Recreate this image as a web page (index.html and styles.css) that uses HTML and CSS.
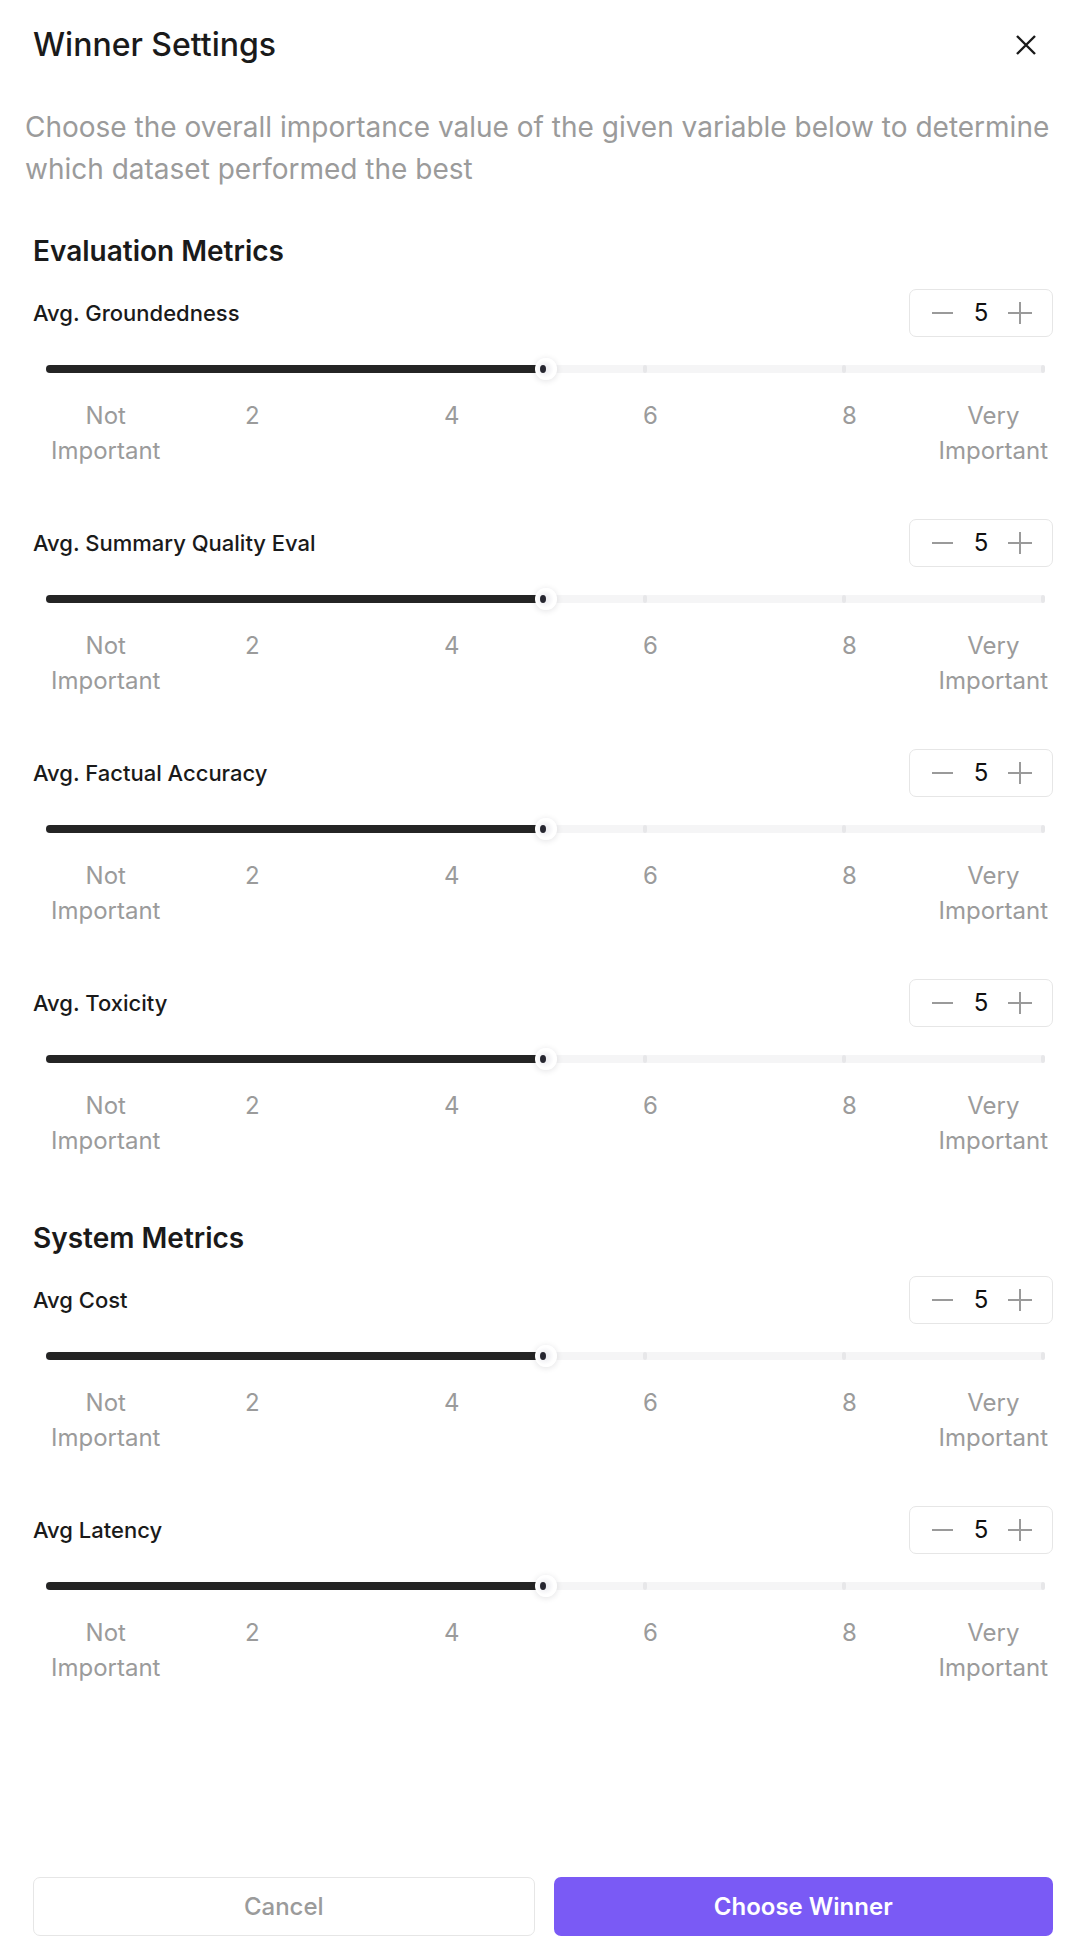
FILE: index.html
```html
<!DOCTYPE html>
<html lang="en">
<head>
<meta charset="utf-8">
<title>Winner Settings</title>
<link rel="stylesheet" href="styles.css">
</head>
<body>
<div class="modal">
  <header class="modal-header">
    <h1 class="modal-title">Winner Settings</h1>
    <button class="close-btn" aria-label="Close">
      <svg width="20" height="20" viewBox="0 0 20 20"><path d="M1 1L19 19M19 1L1 19" stroke="#1a1a1a" stroke-width="2.4" fill="none"/></svg>
    </button>
  </header>
  <p class="modal-desc">Choose the overall importance value of the given variable below to determine which dataset performed the best</p>

  <section class="metric-section">
    <h2 class="section-title">Evaluation Metrics</h2>
    <div class="metric-list">
      <div class="metric">
        <div class="metric-head">
          <span class="metric-name">Avg. Groundedness</span>
          <div class="stepper">
            <svg class="step-icon" width="22" height="22" viewBox="0 0 22 22"><path d="M0 11H21" stroke="#9a9a9a" stroke-width="2"/></svg>
            <span class="stepper-value">5</span>
            <svg class="step-icon" width="24" height="24" viewBox="0 0 24 24"><path d="M0 12H24M12 1V23" stroke="#9a9a9a" stroke-width="2"/></svg>
          </div>
        </div>
        <div class="slider">
          <div class="slider-track">
            <div class="slider-fill" style="width:50%"></div>
            <span class="tick" style="left:0%"></span>
            <span class="tick" style="left:19.92%"></span>
            <span class="tick" style="left:39.84%"></span>
            <span class="tick" style="left:59.76%"></span>
            <span class="tick" style="left:79.68%"></span>
            <span class="tick" style="left:99.6%"></span>
            <span class="thumb" style="left:50%"><span class="thumb-dot"></span></span>
          </div>
        </div>
        <div class="marks">
          <span class="mark mark-start">Not<br>Important</span>
          <span class="mark" style="left:19.92%">2</span>
          <span class="mark" style="left:39.84%">4</span>
          <span class="mark" style="left:59.76%">6</span>
          <span class="mark" style="left:79.68%">8</span>
          <span class="mark mark-end">Very<br>Important</span>
        </div>
      </div>

      <div class="metric">
        <div class="metric-head">
          <span class="metric-name">Avg. Summary Quality Eval</span>
          <div class="stepper">
            <svg class="step-icon" width="22" height="22" viewBox="0 0 22 22"><path d="M0 11H21" stroke="#9a9a9a" stroke-width="2"/></svg>
            <span class="stepper-value">5</span>
            <svg class="step-icon" width="24" height="24" viewBox="0 0 24 24"><path d="M0 12H24M12 1V23" stroke="#9a9a9a" stroke-width="2"/></svg>
          </div>
        </div>
        <div class="slider">
          <div class="slider-track">
            <div class="slider-fill" style="width:50%"></div>
            <span class="tick" style="left:0%"></span>
            <span class="tick" style="left:19.92%"></span>
            <span class="tick" style="left:39.84%"></span>
            <span class="tick" style="left:59.76%"></span>
            <span class="tick" style="left:79.68%"></span>
            <span class="tick" style="left:99.6%"></span>
            <span class="thumb" style="left:50%"><span class="thumb-dot"></span></span>
          </div>
        </div>
        <div class="marks">
          <span class="mark mark-start">Not<br>Important</span>
          <span class="mark" style="left:19.92%">2</span>
          <span class="mark" style="left:39.84%">4</span>
          <span class="mark" style="left:59.76%">6</span>
          <span class="mark" style="left:79.68%">8</span>
          <span class="mark mark-end">Very<br>Important</span>
        </div>
      </div>

      <div class="metric">
        <div class="metric-head">
          <span class="metric-name">Avg. Factual Accuracy</span>
          <div class="stepper">
            <svg class="step-icon" width="22" height="22" viewBox="0 0 22 22"><path d="M0 11H21" stroke="#9a9a9a" stroke-width="2"/></svg>
            <span class="stepper-value">5</span>
            <svg class="step-icon" width="24" height="24" viewBox="0 0 24 24"><path d="M0 12H24M12 1V23" stroke="#9a9a9a" stroke-width="2"/></svg>
          </div>
        </div>
        <div class="slider">
          <div class="slider-track">
            <div class="slider-fill" style="width:50%"></div>
            <span class="tick" style="left:0%"></span>
            <span class="tick" style="left:19.92%"></span>
            <span class="tick" style="left:39.84%"></span>
            <span class="tick" style="left:59.76%"></span>
            <span class="tick" style="left:79.68%"></span>
            <span class="tick" style="left:99.6%"></span>
            <span class="thumb" style="left:50%"><span class="thumb-dot"></span></span>
          </div>
        </div>
        <div class="marks">
          <span class="mark mark-start">Not<br>Important</span>
          <span class="mark" style="left:19.92%">2</span>
          <span class="mark" style="left:39.84%">4</span>
          <span class="mark" style="left:59.76%">6</span>
          <span class="mark" style="left:79.68%">8</span>
          <span class="mark mark-end">Very<br>Important</span>
        </div>
      </div>

      <div class="metric">
        <div class="metric-head">
          <span class="metric-name">Avg. Toxicity</span>
          <div class="stepper">
            <svg class="step-icon" width="22" height="22" viewBox="0 0 22 22"><path d="M0 11H21" stroke="#9a9a9a" stroke-width="2"/></svg>
            <span class="stepper-value">5</span>
            <svg class="step-icon" width="24" height="24" viewBox="0 0 24 24"><path d="M0 12H24M12 1V23" stroke="#9a9a9a" stroke-width="2"/></svg>
          </div>
        </div>
        <div class="slider">
          <div class="slider-track">
            <div class="slider-fill" style="width:50%"></div>
            <span class="tick" style="left:0%"></span>
            <span class="tick" style="left:19.92%"></span>
            <span class="tick" style="left:39.84%"></span>
            <span class="tick" style="left:59.76%"></span>
            <span class="tick" style="left:79.68%"></span>
            <span class="tick" style="left:99.6%"></span>
            <span class="thumb" style="left:50%"><span class="thumb-dot"></span></span>
          </div>
        </div>
        <div class="marks">
          <span class="mark mark-start">Not<br>Important</span>
          <span class="mark" style="left:19.92%">2</span>
          <span class="mark" style="left:39.84%">4</span>
          <span class="mark" style="left:59.76%">6</span>
          <span class="mark" style="left:79.68%">8</span>
          <span class="mark mark-end">Very<br>Important</span>
        </div>
      </div>
    </div>
  </section>

  <section class="metric-section metric-section-next">
    <h2 class="section-title">System Metrics</h2>
    <div class="metric-list">
      <div class="metric">
        <div class="metric-head">
          <span class="metric-name">Avg Cost</span>
          <div class="stepper">
            <svg class="step-icon" width="22" height="22" viewBox="0 0 22 22"><path d="M0 11H21" stroke="#9a9a9a" stroke-width="2"/></svg>
            <span class="stepper-value">5</span>
            <svg class="step-icon" width="24" height="24" viewBox="0 0 24 24"><path d="M0 12H24M12 1V23" stroke="#9a9a9a" stroke-width="2"/></svg>
          </div>
        </div>
        <div class="slider">
          <div class="slider-track">
            <div class="slider-fill" style="width:50%"></div>
            <span class="tick" style="left:0%"></span>
            <span class="tick" style="left:19.92%"></span>
            <span class="tick" style="left:39.84%"></span>
            <span class="tick" style="left:59.76%"></span>
            <span class="tick" style="left:79.68%"></span>
            <span class="tick" style="left:99.6%"></span>
            <span class="thumb" style="left:50%"><span class="thumb-dot"></span></span>
          </div>
        </div>
        <div class="marks">
          <span class="mark mark-start">Not<br>Important</span>
          <span class="mark" style="left:19.92%">2</span>
          <span class="mark" style="left:39.84%">4</span>
          <span class="mark" style="left:59.76%">6</span>
          <span class="mark" style="left:79.68%">8</span>
          <span class="mark mark-end">Very<br>Important</span>
        </div>
      </div>

      <div class="metric">
        <div class="metric-head">
          <span class="metric-name">Avg Latency</span>
          <div class="stepper">
            <svg class="step-icon" width="22" height="22" viewBox="0 0 22 22"><path d="M0 11H21" stroke="#9a9a9a" stroke-width="2"/></svg>
            <span class="stepper-value">5</span>
            <svg class="step-icon" width="24" height="24" viewBox="0 0 24 24"><path d="M0 12H24M12 1V23" stroke="#9a9a9a" stroke-width="2"/></svg>
          </div>
        </div>
        <div class="slider">
          <div class="slider-track">
            <div class="slider-fill" style="width:50%"></div>
            <span class="tick" style="left:0%"></span>
            <span class="tick" style="left:19.92%"></span>
            <span class="tick" style="left:39.84%"></span>
            <span class="tick" style="left:59.76%"></span>
            <span class="tick" style="left:79.68%"></span>
            <span class="tick" style="left:99.6%"></span>
            <span class="thumb" style="left:50%"><span class="thumb-dot"></span></span>
          </div>
        </div>
        <div class="marks">
          <span class="mark mark-start">Not<br>Important</span>
          <span class="mark" style="left:19.92%">2</span>
          <span class="mark" style="left:39.84%">4</span>
          <span class="mark" style="left:59.76%">6</span>
          <span class="mark" style="left:79.68%">8</span>
          <span class="mark mark-end">Very<br>Important</span>
        </div>
      </div>
    </div>
  </section>

  <footer class="modal-footer">
    <button class="btn btn-secondary">Cancel</button>
    <button class="btn btn-primary">Choose Winner</button>
  </footer>
</div>
</body>
</html>
```
FILE: styles.css
```css
* {
  box-sizing: border-box;
}

html,
body {
  margin: 0;
  padding: 0;
  height: 100%;
  background: #ffffff;
}

body {
  font-family: Inter, "Noto Sans", "Liberation Sans", sans-serif;
  color: #1a1a1a;
}

.modal {
  min-height: 100vh;
  display: flex;
  flex-direction: column;
  padding: 25px 23px 16px 33px;
}

.modal-header {
  display: flex;
  align-items: center;
  justify-content: space-between;
  height: 40px;
}

.modal-title {
  margin: 0;
  font-size: 32px;
  line-height: 40px;
  font-weight: 500;
  color: #1a1a1a;
}

.close-btn {
  border: 0;
  padding: 0;
  margin: 0 17px 0 0;
  background: transparent;
  width: 20px;
  height: 20px;
  display: flex;
  cursor: pointer;
}

.modal-desc {
  margin: 41px 0 0 -8px;
  font-size: 28px;
  line-height: 42px;
  font-weight: 400;
  color: #9b9b9b;
}

.metric-section {
  margin-top: 45px;
}

.metric-section-next {
  margin-top: 64px;
}

.section-title {
  margin: 0;
  font-size: 28px;
  line-height: 32px;
  font-weight: 600;
  color: #1a1a1a;
}

.metric-list {
  margin-top: 22px;
  display: flex;
  flex-direction: column;
  gap: 51px;
}

.metric-head {
  display: flex;
  align-items: center;
  justify-content: space-between;
  height: 48px;
}

.metric-name {
  font-size: 22px;
  line-height: 30px;
  font-weight: 500;
  color: #1a1a1a;
}

.stepper {
  width: 144px;
  height: 48px;
  border: 1.5px solid #e6e6e6;
  border-radius: 7px;
  display: flex;
  align-items: center;
  justify-content: space-between;
  padding: 0 20px 0 22px;
}

.step-icon {
  display: block;
}

.stepper-value {
  font-size: 24px;
  line-height: 30px;
  color: #111111;
}

.slider {
  margin: 21px 8px 0 13px;
  padding: 7px 0;
}

.slider-track {
  position: relative;
  height: 8px;
  border-radius: 4px;
  background: #f5f5f6;
}

.slider-fill {
  position: absolute;
  left: 0;
  top: 0;
  height: 8px;
  border-radius: 4px;
  background: #242424;
  z-index: 1;
}

.tick {
  position: absolute;
  top: 0;
  width: 4px;
  height: 8px;
  border-radius: 2px;
  background: #e7e7e9;
}

.thumb {
  position: absolute;
  top: -7px;
  width: 22px;
  height: 22px;
  margin-left: -11px;
  border-radius: 50%;
  background: radial-gradient(circle at 45% 50%, #ececf1 0, #f3f3f6 28%, #ffffff 55%);
  box-shadow: 0 1px 6px rgba(20, 20, 40, 0.13);
  z-index: 2;
}

.thumb-dot {
  position: absolute;
  left: 5px;
  top: 7px;
  width: 6px;
  height: 8px;
  border-radius: 50%;
  background: #262630;
}

.marks {
  position: relative;
  margin: 18px 8px 0 13px;
  height: 70px;
}

.mark {
  position: absolute;
  top: 0;
  font-size: 24px;
  line-height: 35px;
  color: #9b9b9b;
  white-space: nowrap;
}

.mark-start {
  left: 5px;
  text-align: center;
}

.mark-end {
  right: -3px;
  text-align: center;
}

.modal-footer {
  margin-top: auto;
  display: flex;
  gap: 19px;
}

.btn {
  flex: 1;
  height: 59px;
  border-radius: 7px;
  font-family: Inter, "Noto Sans", "Liberation Sans", sans-serif;
  font-size: 24px;
  cursor: pointer;
}

.btn-secondary {
  background: #ffffff;
  border: 1.5px solid #e6e6e6;
  color: #9b9b9b;
  font-weight: 500;
}

.btn-primary {
  background: #7a5af5;
  border: 0;
  color: #ffffff;
  font-weight: 600;
}
```
